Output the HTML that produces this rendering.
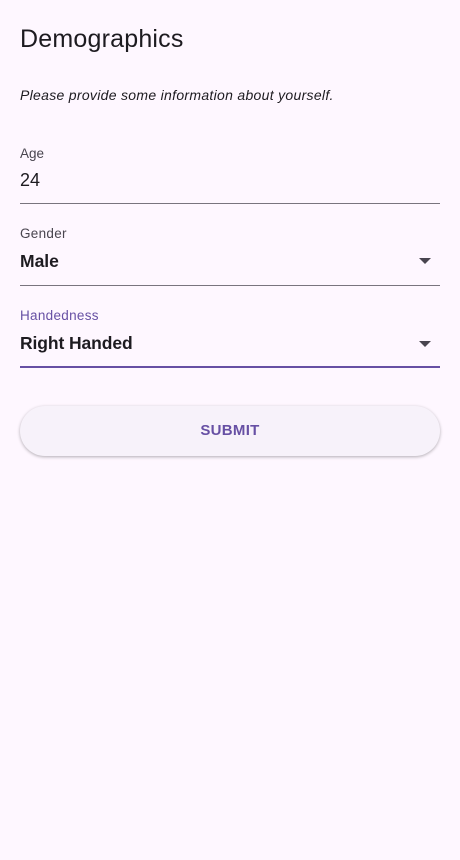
<!DOCTYPE html>
<html><head><style>
body{margin:0;width:460px;height:860px;background:#fef7ff;font-family:"Liberation Sans",sans-serif;position:relative;overflow:hidden;color:#1d1b20}
.a{position:absolute;white-space:nowrap}
.line{position:absolute;left:20px;width:420px;height:1px;background:#79747e}
.arrow{position:absolute;left:419px;width:0;height:0;border-left:6px solid transparent;border-right:6px solid transparent;border-top:6px solid #49454f}
</style></head><body>
<div class="a" style="left:20px;top:25px;font-size:25px;letter-spacing:0.2px">Demographics</div>
<div class="a" style="left:20px;top:87px;font-size:14px;font-style:italic;letter-spacing:0.3px">Please provide some information about yourself.</div>
<div class="a" style="left:20px;top:146px;font-size:13.5px;color:#49454f">Age</div>
<div class="a" style="left:20px;top:170px;font-size:18px">24</div>
<div class="line" style="top:203px"></div>
<div class="a" style="left:20px;top:226px;font-size:13.5px;color:#49454f;letter-spacing:0.3px">Gender</div>
<div class="a" style="left:20px;top:251px;font-size:17.5px;font-weight:bold">Male</div>
<div class="arrow" style="top:258px"></div>
<div class="line" style="top:285px"></div>
<div class="a" style="left:20px;top:308px;font-size:13.5px;color:#6750a4;letter-spacing:0.3px">Handedness</div>
<div class="a" style="left:20px;top:333px;font-size:17.5px;font-weight:bold;letter-spacing:-0.1px">Right Handed</div>
<div class="arrow" style="top:341px"></div>
<div class="line" style="top:366px;height:2px;background:#6750a4"></div>
<div style="position:absolute;left:20px;top:406px;width:420px;height:50px;border-radius:25px;background:#f7f2fa;box-shadow:0 1px 3px rgba(0,0,0,0.3);text-align:center;line-height:50px;font-size:15px;font-weight:bold;color:#6750a4;letter-spacing:0.3px">SUBMIT</div>
</body></html>
